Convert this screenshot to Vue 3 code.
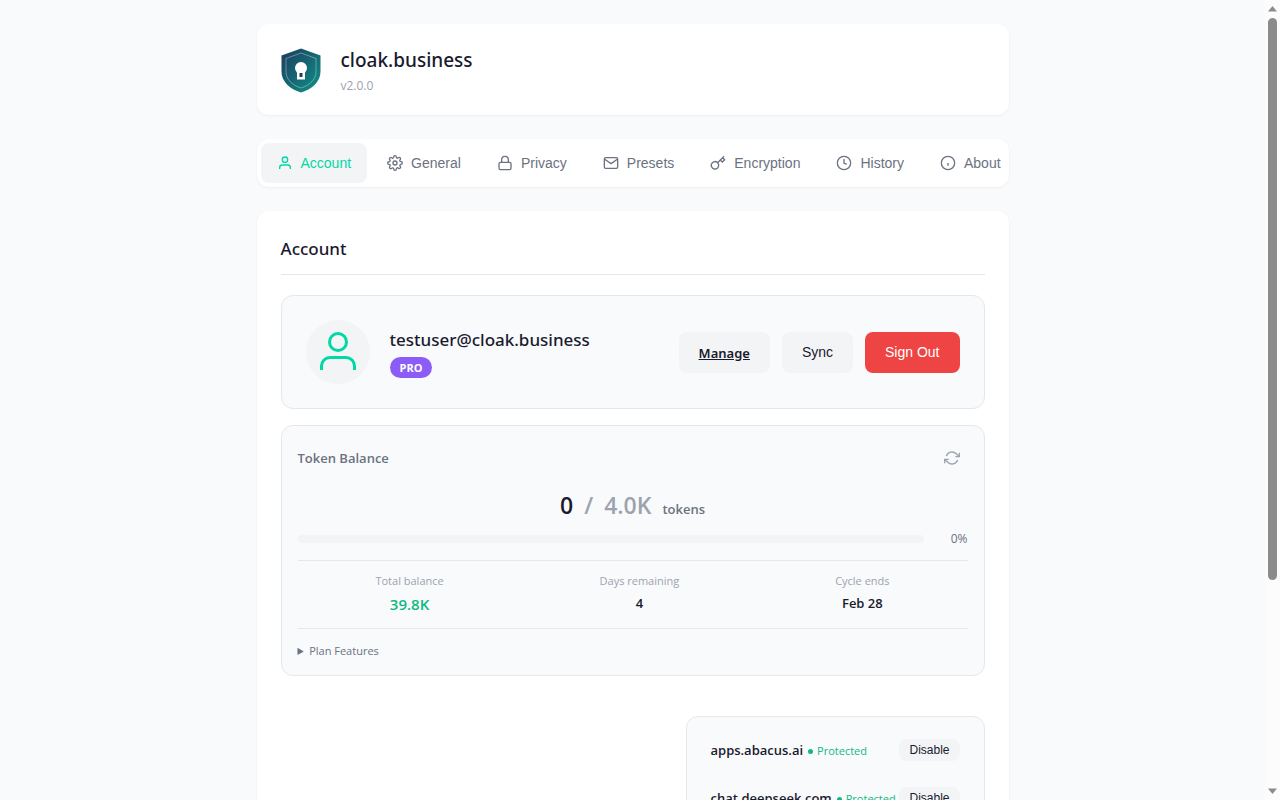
<script setup>
import { ref } from 'vue'

const active = ref('Account')
const tabs = [
  { name: 'Account', paths: ['M20 21v-2a4 4 0 0 0-4-4H8a4 4 0 0 0-4 4v2'], circle: [12, 7, 4] },
  {
    name: 'General',
    paths: ['M19.4 15a1.65 1.65 0 0 0 .33 1.82l.06.06a2 2 0 1 1-2.83 2.83l-.06-.06a1.65 1.65 0 0 0-1.82-.33 1.65 1.65 0 0 0-1 1.51V21a2 2 0 0 1-4 0v-.09A1.65 1.65 0 0 0 9 19.4a1.65 1.65 0 0 0-1.82.33l-.06.06a2 2 0 1 1-2.83-2.83l.06-.06a1.65 1.65 0 0 0 .33-1.82 1.65 1.65 0 0 0-1.51-1H3a2 2 0 0 1 0-4h.09A1.65 1.65 0 0 0 4.6 9a1.65 1.65 0 0 0-.33-1.82l-.06-.06a2 2 0 1 1 2.83-2.83l.06.06a1.65 1.65 0 0 0 1.82.33H9a1.65 1.65 0 0 0 1-1.51V3a2 2 0 0 1 4 0v.09a1.65 1.65 0 0 0 1 1.51 1.65 1.65 0 0 0 1.82-.33l.06-.06a2 2 0 1 1 2.83 2.83l-.06.06a1.65 1.65 0 0 0-.33 1.82V9a1.65 1.65 0 0 0 1.51 1H21a2 2 0 0 1 0 4h-.09a1.65 1.65 0 0 0-1.51 1z'],
    circle: [12, 12, 3],
  },
  { name: 'Privacy', paths: ['M5 11h14a2 2 0 0 1 2 2v7a2 2 0 0 1-2 2H5a2 2 0 0 1-2-2v-7a2 2 0 0 1 2-2z', 'M7 11V7a5 5 0 0 1 10 0v4'] },
  { name: 'Presets', paths: ['M4 4h16a2 2 0 0 1 2 2v12a2 2 0 0 1-2 2H4a2 2 0 0 1-2-2V6a2 2 0 0 1 2-2z', 'M22 6l-10 7L2 6'] },
  { name: 'Encryption', paths: ['M21 2l-2 2m-7.61 7.61a5.5 5.5 0 1 1-7.778 7.778 5.5 5.5 0 0 1 7.777-7.777zm0 0L15.5 7.5m0 0l3 3L22 7l-3-3m-3.5 3.5L19 4'] },
  { name: 'History', paths: ['M12 6v6l4 2'], circle: [12, 12, 10] },
  { name: 'About', paths: ['M12 16v-4', 'M12 8h.01'], circle: [12, 12, 10] },
]
const stats = [
  { label: 'Total balance', value: '39.8K', highlight: true },
  { label: 'Days remaining', value: '4' },
  { label: 'Cycle ends', value: 'Feb 28' },
]
const used = 0
const sites = ['apps.abacus.ai', 'chat.deepseek.com']
</script>

<template>
  <div class="window">
    <div class="viewport">
      <main class="container">
        <header class="header">
          <svg class="logo" viewBox="0 0 48 48" aria-hidden="true">
            <defs>
              <linearGradient id="shield" x1="0" y1="0" x2="1" y2="1">
                <stop offset="0" stop-color="#1e3a5f" />
                <stop offset="1" stop-color="#0d9488" />
              </linearGradient>
            </defs>
            <path d="M24 2.500 43.500 9.500v16c0 10-8 17.500-19.500 21C12.500 43 4.500 35.500 4.500 25.500v-16z" fill="url(#shield)" />
            <path d="M24 7 39 12.500v13c0 8-6 13.500-15 16.500C15 39 9 33.500 9 25.500v-13z" fill="none" stroke="#fff" stroke-opacity=".35" />
            <circle cx="24" cy="22" r="6" fill="#fff" />
            <path d="M20 25h8v8.500h-8z" fill="#fff" />
            <rect x="22.500" y="27" width="3" height="4" fill="#1e3a5f" />
          </svg>
          <div>
            <h1>cloak.business</h1>
            <p class="version">v2.0.0</p>
          </div>
        </header>

        <nav class="tabs">
          <button
            v-for="tab in tabs"
            :key="tab.name"
            type="button"
            class="tab"
            :class="{ active: active === tab.name }"
            @click="active = tab.name"
          >
            <svg class="icon" viewBox="0 0 24 24" aria-hidden="true">
              <path v-for="d in tab.paths" :key="d" :d="d" />
              <circle v-if="tab.circle" :cx="tab.circle[0]" :cy="tab.circle[1]" :r="tab.circle[2]" />
            </svg>
            {{ tab.name }}
          </button>
        </nav>

        <section class="panel">
          <h2>Account</h2>

          <div class="card profile">
            <div class="avatar">
              <svg class="icon" viewBox="0 0 24 24" aria-hidden="true">
                <path d="M20.250 21v-2a4.250 4.250 0 0 0-4.250-4.250H8A4.250 4.250 0 0 0 3.750 19v2" />
                <circle cx="12" cy="7" r="4.250" />
              </svg>
            </div>
            <div class="identity">
              <div class="email">testuser@cloak.business</div>
              <span class="plan">PRO</span>
            </div>
            <div class="actions">
              <a href="#manage" class="btn manage">Manage</a>
              <button type="button" class="btn">Sync</button>
              <button type="button" class="btn danger">Sign Out</button>
            </div>
          </div>

          <div class="card tokens">
            <div class="tokens-head">
              <h3>Token Balance</h3>
              <button type="button" class="refresh" aria-label="Refresh">
                <svg class="icon" viewBox="0 0 24 24" aria-hidden="true">
                  <path d="M23 4v6h-6" />
                  <path d="M1 20v-6h6" />
                  <path d="M3.510 9a9 9 0 0 1 14.850-3.360L23 10M1 14l4.640 4.360A9 9 0 0 0 20.490 15" />
                </svg>
              </button>
            </div>
            <div class="amount">
              <span class="used">{{ used }}</span>
              <span class="limit">/</span>
              <span class="limit">4.0K</span>
              <span class="unit">tokens</span>
            </div>
            <div class="usage">
              <div class="track"><div class="fill" :style="{ width: used + '%' }"></div></div>
              <span class="percent">{{ used }}%</span>
            </div>
            <div class="stats">
              <div v-for="s in stats" :key="s.label" class="stat">
                <span class="stat-label">{{ s.label }}</span>
                <span class="stat-value" :class="{ highlight: s.highlight }">{{ s.value }}</span>
              </div>
            </div>
            <details class="features">
              <summary>Plan Features</summary>
            </details>
          </div>

          <div class="card sites">
            <div v-for="site in sites" :key="site" class="site">
              <div class="site-info">
                <span class="site-name">{{ site }}</span>
                <span class="status">Protected</span>
              </div>
              <button type="button" class="disable">Disable</button>
            </div>
          </div>
        </section>
      </main>
    </div>
    <div class="scrollbar" aria-hidden="true">
      <svg class="arrow" viewBox="0 0 15 17"><path d="M7.500 6 12 11.500H3z" /></svg>
      <div class="rail"><div class="thumb"></div></div>
      <svg class="arrow" viewBox="0 0 15 17"><path d="M3 5.500h9L7.500 11z" /></svg>
    </div>
  </div>
</template>

<style>
body {
  margin: 0;
  background: #f9fafc;
}
</style>

<style scoped>
.window {
  display: flex;
  height: 100vh;
  overflow: hidden;
  background: #f9fafc;
  color: #1a1a2e;
  font: 14px/20px "Open Sans", "Noto Sans", sans-serif;
}
.window * {
  box-sizing: border-box;
}
.viewport {
  flex: 1;
  min-width: 0;
  overflow: hidden;
}
.container {
  max-width: 800px;
  margin: 0 auto;
  padding: 24px;
}
h1, h2, h3, p {
  margin: 0;
}
h1, h2, .email, .manage {
  font-family: "Noto Sans", "Open Sans", sans-serif;
}
button {
  border: 0;
  cursor: pointer;
  font-family: "Liberation Sans", Arial, sans-serif;
}
.icon {
  flex: none;
  width: 16px;
  height: 16px;
  fill: none;
  stroke: currentColor;
  stroke-width: 2;
}
.header, .tabs, .panel {
  background: #fff;
  border-radius: 12px;
  box-shadow: 0 1px 3px rgba(0, 0, 0, 0.05);
}
.header {
  display: flex;
  align-items: center;
  gap: 16px;
  margin-bottom: 24px;
  padding: 20px;
}
.logo {
  width: 48px;
  height: 48px;
}
h1 {
  font-size: 19px;
  font-weight: 500;
  line-height: 32px;
}
.version {
  color: #9ca3af;
  font-size: 12px;
  line-height: 19px;
}
.tabs {
  display: flex;
  gap: 4px;
  margin-bottom: 24px;
  padding: 4px;
  overflow: hidden;
}
.tab {
  display: flex;
  flex: none;
  align-items: center;
  gap: 8px;
  height: 40px;
  padding: 0 16px;
  border-radius: 8px;
  background: transparent;
  color: #6b7280;
  font-size: 14px;
}
.tab.active {
  background: #f3f4f6;
  color: #00d9a5;
}
.panel {
  padding: 24px;
}
h2 {
  margin-bottom: 20px;
  padding-bottom: 12px;
  border-bottom: 1px solid #e5e7eb;
  font-size: 17px;
  font-weight: 500;
  line-height: 27px;
}
.card {
  border: 1px solid #e5e7eb;
  border-radius: 12px;
  background: #f9fafc;
}
.profile {
  display: flex;
  align-items: center;
  gap: 20px;
  padding: 24px;
}
.avatar {
  display: flex;
  align-items: center;
  justify-content: center;
  width: 64px;
  height: 64px;
  border-radius: 50%;
  background: #f3f4f6;
  color: #00d9a5;
}
.avatar .icon {
  width: 48px;
  height: 48px;
  stroke-width: 1.5;
}
.identity {
  flex: 1;
}
.email {
  font-size: 17px;
  font-weight: 500;
  line-height: 28px;
}
.plan {
  display: block;
  width: fit-content;
  margin-top: 3px;
  padding: 0 10px;
  border-radius: 12px;
  background: #8b5cf6;
  color: #fff;
  font-size: 11px;
  font-weight: 700;
  line-height: 21px;
}
.actions {
  display: flex;
  gap: 12px;
}
.btn {
  height: 41px;
  padding: 0 20px;
  border-radius: 8px;
  background: #f3f4f6;
  color: #1a1a2e;
  font-size: 14px;
  line-height: 41px;
}
.manage {
  font-size: 13px;
  font-weight: 600;
  line-height: 43px;
}
.danger {
  background: #ef4444;
  color: #fff;
}
.tokens {
  margin-top: 16px;
  padding: 16px 16px 14px;
}
.tokens-head {
  display: flex;
  align-items: center;
  justify-content: space-between;
}
h3 {
  color: #6b7280;
  font-size: 13px;
  font-weight: 600;
}
.refresh {
  display: flex;
  padding: 8px;
  background: transparent;
  color: #9ca3af;
}
.amount {
  display: flex;
  align-items: baseline;
  justify-content: center;
  gap: 11px;
  margin-top: 13px;
  font-size: 23px;
  font-weight: 600;
  line-height: 36px;
}
.limit {
  color: #9ca3af;
}
.unit {
  color: #6b7280;
  font-size: 13px;
  font-weight: 600;
}
.usage {
  display: flex;
  align-items: center;
  gap: 12px;
  margin-top: 2px;
}
.track {
  flex: 1;
  height: 8px;
  overflow: hidden;
  border-radius: 4px;
  background: #f3f4f6;
}
.fill {
  height: 100%;
  background: #00d9a5;
}
.percent {
  min-width: 32px;
  color: #6b7280;
  font-size: 12px;
  text-align: right;
}
.stats {
  display: flex;
  justify-content: space-around;
  margin-top: 11px;
  padding: 10px 0 12px;
  border-top: 1px solid #e5e7eb;
  border-bottom: 1px solid #e5e7eb;
}
.stat {
  display: flex;
  flex-direction: column;
  align-items: center;
  gap: 1px;
}
.stat-label {
  color: #9ca3af;
  font-size: 11px;
}
.stat-value {
  font-size: 13px;
  font-weight: 600;
  line-height: 22px;
}
.stat-value.highlight {
  color: #10b981;
  font-size: 15px;
  line-height: 24px;
}
.features {
  margin-top: 12px;
  color: #6b7280;
  font-size: 11px;
}
.sites {
  width: fit-content;
  margin-top: 40px;
  margin-left: auto;
  padding: 9px 24px;
}
.site {
  display: flex;
  align-items: center;
  width: 249px;
  height: 48px;
}
.site-info {
  display: flex;
  flex: 1;
  align-items: baseline;
  gap: 5px;
  min-width: 0;
  white-space: nowrap;
}
.site-name {
  font-size: 13px;
  font-weight: 600;
}
.status {
  color: #10b981;
  font-size: 11px;
}
.status::before {
  content: "";
  display: inline-block;
  width: 5px;
  height: 5px;
  margin: 0 4px 1px 0;
  border-radius: 50%;
  background: currentColor;
}
.disable {
  flex: none;
  height: 22px;
  padding: 0 10px;
  border-radius: 8px;
  background: #f3f4f6;
  color: #1a1a2e;
  font-size: 12px;
}
.scrollbar {
  display: flex;
  flex-direction: column;
  width: 15px;
  background: #fcfcfc;
}
.arrow {
  width: 15px;
  height: 17px;
  fill: #8b8b8b;
}
.rail {
  flex: 1;
  padding: 1px 3px;
}
.thumb {
  height: 73.5%;
  border-radius: 5px;
  background: #8b8b8b;
}
</style>
